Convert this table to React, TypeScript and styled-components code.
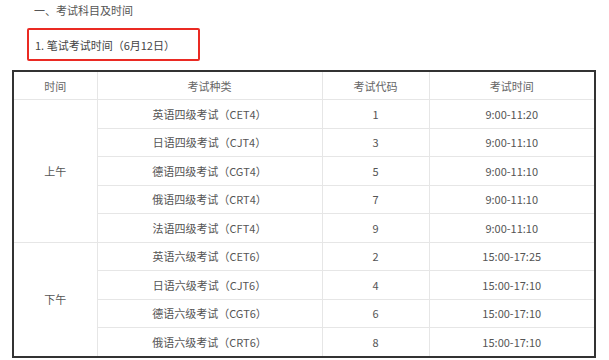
import React from "react";
import styled, { createGlobalStyle } from "styled-components";

const Global = createGlobalStyle`
  html, body { margin: 0; padding: 0; background: #fff; }
  body { font-family: "Noto Sans CJK SC", "Noto Sans", sans-serif; color: #555; }
`;

const Page = styled.div`
  width: 609px;
  height: 360px;
  overflow: hidden;
  display: flex;
  flex-direction: column;
`;

const Heading = styled.div`
  margin: 4px 0 0 34px;
  font-size: 11px;
  line-height: 13px;
  height: 13px;
  color: #555;
`;

const SubTitle = styled.div`
  margin: 11px 0 0 27px;
  width: 173px;
  height: 33px;
  box-sizing: border-box;
  border: 2px solid #ea2a23;
  border-radius: 2px;
  display: flex;
  align-items: center;
  padding-left: 6px;
  font-size: 11px;
  color: #444;
`;

const TableFrame = styled.div`
  margin: 9px 0 0 12px;
  width: 584px;
  box-sizing: border-box;
  border: 2px solid #333;
`;

const Table = styled.table`
  width: 100%;
  border-collapse: collapse;
  table-layout: fixed;
`;

const Row = styled.tr<{ $head?: boolean }>`
  height: ${(p) => (p.$head ? "27.6px" : "28.5px")};
`;

const Cell = styled.td<{ $noRight?: boolean; $noBottom?: boolean }>`
  padding: 0;
  text-align: center;
  vertical-align: middle;
  font-size: 11px;
  color: #555;
  border-right: ${(p) => (p.$noRight ? "none" : "1px solid #e6e6e6")};
  border-bottom: ${(p) => (p.$noBottom ? "none" : "1px solid #e6e6e6")};
`;

const HeadCell = styled(Cell).attrs({ as: "th" })`
  font-weight: normal;
  color: #666;
`;

type Exam = { name: string; code: string; time: string };

const morning: Exam[] = [
  { name: "英语四级考试（CET4）", code: "1", time: "9:00-11:20" },
  { name: "日语四级考试（CJT4）", code: "3", time: "9:00-11:10" },
  { name: "德语四级考试（CGT4）", code: "5", time: "9:00-11:10" },
  { name: "俄语四级考试（CRT4）", code: "7", time: "9:00-11:10" },
  { name: "法语四级考试（CFT4）", code: "9", time: "9:00-11:10" },
];

const afternoon: Exam[] = [
  { name: "英语六级考试（CET6）", code: "2", time: "15:00-17:25" },
  { name: "日语六级考试（CJT6）", code: "4", time: "15:00-17:10" },
  { name: "德语六级考试（CGT6）", code: "6", time: "15:00-17:10" },
  { name: "俄语六级考试（CRT6）", code: "8", time: "15:00-17:10" },
];

const Group = ({ label, rows, last }: { label: string; rows: Exam[]; last?: boolean }) => (
  <>
    {rows.map((r, i) => {
      const bottom = !!last && i === rows.length - 1;
      return (
        <Row key={r.code}>
          {i === 0 && (
            <Cell rowSpan={rows.length} $noBottom={last}>
              {label}
            </Cell>
          )}
          <Cell $noBottom={bottom}>{r.name}</Cell>
          <Cell $noBottom={bottom}>{r.code}</Cell>
          <Cell $noBottom={bottom} $noRight>
            {r.time}
          </Cell>
        </Row>
      );
    })}
  </>
);

export default function App() {
  return (
    <Page>
      <Global />
      <Heading>一、考试科目及时间</Heading>
      <SubTitle>1. 笔试考试时间（6月12日）</SubTitle>
      <TableFrame>
        <Table>
          <colgroup>
            <col style={{ width: 83 }} />
            <col style={{ width: 225 }} />
            <col style={{ width: 107 }} />
            <col />
          </colgroup>
          <thead>
            <Row $head>
              <HeadCell>时间</HeadCell>
              <HeadCell>考试种类</HeadCell>
              <HeadCell>考试代码</HeadCell>
              <HeadCell $noRight>考试时间</HeadCell>
            </Row>
          </thead>
          <tbody>
            <Group label="上午" rows={morning} />
            <Group label="下午" rows={afternoon} last />
          </tbody>
        </Table>
      </TableFrame>
    </Page>
  );
}
